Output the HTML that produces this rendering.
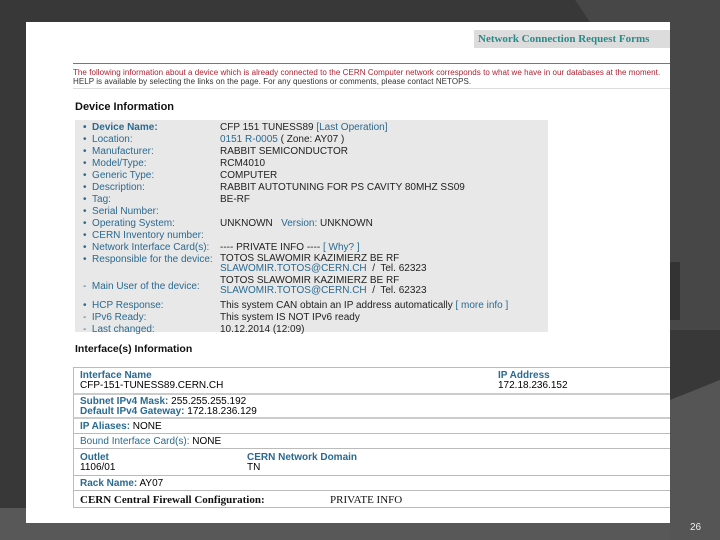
<!DOCTYPE html>
<html><head><meta charset="utf-8"><style>
*{margin:0;padding:0;box-sizing:border-box}
body{width:720px;height:540px;overflow:hidden;background:#383838;position:relative;font-family:"Liberation Sans",sans-serif}
.a{position:absolute;white-space:nowrap}
#w{position:absolute;left:26px;top:22px;width:644px;height:501px;background:#fff;overflow:hidden}
.t{color:#2a6a90}
.r{font-size:10px;line-height:12px}
.lab{position:absolute;left:2px;color:#2a6a90}
.val{position:absolute;left:139px;color:#222}
.tb{position:absolute;left:47px;width:600px;border-left:1px solid #bbb;border-top:1px solid #bbb;font-size:10px;line-height:10px}
</style></head><body>
<svg class="a" style="left:0;top:0" width="720" height="540">
<polygon points="575,0 720,0 720,540 640,540 640,430 720,400 720,330 670,330 670,22 590,22" fill="#474747"/>
<polygon points="0,508 720,508 720,540 0,540" fill="#585858"/>
<polygon points="670,400 720,380 720,540 670,540" fill="#555"/>
<polygon points="670,262 680,262 680,320 670,320" fill="#333"/>
</svg>
<div id="w">
 <div class="a" style="left:448px;top:8px;width:200px;height:18px;background:#dcdcdc;font-family:'Liberation Serif',serif;font-weight:bold;color:#2a8a8a;font-size:11px;line-height:18px;padding-left:4px">Network Connection Request Forms</div>
 <div class="a" style="left:47px;top:41px;width:600px;height:1px;background:#777"></div>
 <div class="a" style="left:47px;top:46px;font-size:8px;line-height:9px;letter-spacing:0.05px;color:#b02030">The following information about a device which is already connected to the CERN Computer network corresponds to what we have in our databases at the moment.<br><span style="color:#333">HELP is available by selecting the links on the page. For any questions or comments, please contact NETOPS.</span></div>
 <div class="a" style="left:47px;top:66px;width:600px;height:1px;background:#ddd"></div>
 <div class="a" style="left:49px;top:79px;font-size:11px;font-weight:bold;color:#111">Device Information</div>
 <div class="a r" style="left:49px;top:98px;width:473px;height:212px;background:#e8e8e8">
  <div style="position:absolute;left:6px;top:2px;width:460px">
   <div style="position:relative;height:12px"><span class="lab" style="font-weight:bold">• &nbsp;Device Name:</span><span class="val">CFP 151 TUNESS89 <span class="t">[Last Operation]</span></span></div>
   <div style="position:relative;height:12px"><span class="lab">• &nbsp;Location:</span><span class="val"><span class="t">0151 R-0005</span> ( Zone: AY07 )</span></div>
   <div style="position:relative;height:12px"><span class="lab">• &nbsp;Manufacturer:</span><span class="val">RABBIT SEMICONDUCTOR</span></div>
   <div style="position:relative;height:12px"><span class="lab">• &nbsp;Model/Type:</span><span class="val">RCM4010</span></div>
   <div style="position:relative;height:12px"><span class="lab">• &nbsp;Generic Type:</span><span class="val">COMPUTER</span></div>
   <div style="position:relative;height:12px"><span class="lab">• &nbsp;Description:</span><span class="val">RABBIT AUTOTUNING FOR PS CAVITY 80MHZ SS09</span></div>
   <div style="position:relative;height:12px"><span class="lab">• &nbsp;Tag:</span><span class="val">BE-RF</span></div>
   <div style="position:relative;height:12px"><span class="lab">• &nbsp;Serial Number:</span></div>
   <div style="position:relative;height:12px"><span class="lab">• &nbsp;Operating System:</span><span class="val">UNKNOWN &nbsp; <span class="t">Version:</span> UNKNOWN</span></div>
   <div style="position:relative;height:12px"><span class="lab">• &nbsp;CERN Inventory number:</span></div>
   <div style="position:relative;height:12px"><span class="lab">• &nbsp;Network Interface Card(s):</span><span class="val">---- PRIVATE INFO ---- <span class="t">[ Why? ]</span></span></div>
   <div style="position:relative;height:22px"><span class="lab">• &nbsp;Responsible for the device:</span><span class="val" style="line-height:10px">TOTOS SLAWOMIR KAZIMIERZ BE RF<br><span class="t">SLAWOMIR.TOTOS@CERN.CH</span> &nbsp;/&nbsp; Tel. 62323</span></div>
   <div style="position:relative;height:24px"><span class="lab" style="top:5px">- &nbsp;Main User of the device:</span><span class="val" style="line-height:10px">TOTOS SLAWOMIR KAZIMIERZ BE RF<br><span class="t">SLAWOMIR.TOTOS@CERN.CH</span> &nbsp;/&nbsp; Tel. 62323</span></div>
   <div style="position:relative;height:12px"><span class="lab">• &nbsp;HCP Response:</span><span class="val">This system CAN obtain an IP address automatically <span class="t">[ more info ]</span></span></div>
   <div style="position:relative;height:12px"><span class="lab">- &nbsp;IPv6 Ready:</span><span class="val">This system IS NOT IPv6 ready</span></div>
   <div style="position:relative;height:12px"><span class="lab">- &nbsp;Last changed:</span><span class="val">10.12.2014 (12:09)</span></div>
  </div>
 </div>
 <div class="a" style="left:49px;top:321px;font-size:10.5px;font-weight:bold;color:#111">Interface(s) Information</div>
 <div class="tb" style="top:345px;height:26px;padding:3px 6px"><span class="t" style="font-weight:bold">Interface Name</span><br>CFP-151-TUNESS89.CERN.CH
   <div class="a" style="left:424px;top:3px"><span class="t" style="font-weight:bold">IP Address</span><br>172.18.236.152</div></div>
 <div class="tb" style="top:371px;height:24px;padding:2px 6px;border-top:2px solid #ccc"><span class="t" style="font-weight:bold">Subnet IPv4 Mask:</span> 255.255.255.192<br><span class="t" style="font-weight:bold">Default IPv4 Gateway:</span> 172.18.236.129</div>
 <div class="tb" style="top:395px;height:16px;padding:3px 6px;border-top:2px solid #ccc"><span class="t" style="font-weight:bold">IP Aliases:</span> NONE</div>
 <div class="tb" style="top:411px;height:15px;padding:3px 6px"><span class="t">Bound Interface Card(s):</span> NONE</div>
 <div class="tb" style="top:426px;height:27px;padding:4px 6px"><span class="t" style="font-weight:bold">Outlet</span><br>1106/01
   <div class="a" style="left:173px;top:4px"><span class="t" style="font-weight:bold">CERN Network Domain</span><br>TN</div></div>
 <div class="tb" style="top:453px;height:15px;padding:3px 6px"><span class="t" style="font-weight:bold">Rack Name:</span> AY07</div>
 <div class="tb" style="top:468px;height:18px;padding:3px 6px;border-bottom:1px solid #bbb;font-family:'Liberation Serif',serif;font-size:11px;line-height:12px;font-weight:bold;color:#111">CERN Central Firewall Configuration:<span class="a" style="left:256px;top:3px;font-weight:normal">PRIVATE INFO</span></div>
</div>
<div class="a" style="left:690px;top:522px;color:#eee;font-size:10px">26</div>
</body></html>
